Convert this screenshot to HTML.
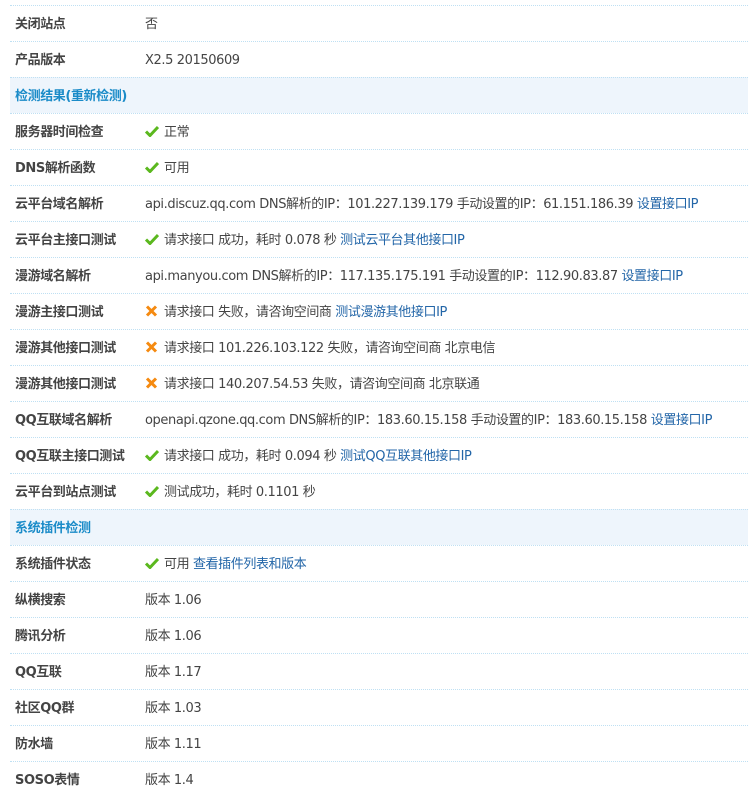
<!DOCTYPE html>
<html><head><meta charset="utf-8"><style>
body{margin:0;width:748px;height:784px;overflow:hidden;background:#fff;font:13px "DejaVu Sans","Noto Sans CJK SC",sans-serif;color:#444;letter-spacing:-0.4px}
.w{position:absolute;left:10px;top:5px;width:738px}
.r{height:35px;border-top:1px dotted #bfe0f3;position:relative;line-height:37px}
.l{position:absolute;left:5px;font-weight:bold;color:#444}
.v{position:absolute;left:135px;white-space:nowrap}
.h{background:#eef5fc;color:#1a8bc8;font-weight:bold;padding-left:5px}
a{color:#2366a8;text-decoration:none}
.ok,.no{display:inline-block;width:14px;height:12px;vertical-align:-1px;margin-right:5px}
</style></head><body>
<svg width="0" height="0" style="position:absolute"><defs>
<symbol id="ok" viewBox="0 0 14 12"><path d="M1 6.5L5 10.5L13 2" stroke="#5bb81e" stroke-width="3" fill="none"/></symbol>
<symbol id="no" viewBox="0 0 14 12"><path d="M2 1.5L11 10.5M11 1.5L2 10.5" stroke="#f58a10" stroke-width="3" fill="none"/></symbol>
</defs></svg>
<div class="w">
<div class="r"><span class="l">关闭站点</span><span class="v">否</span></div>
<div class="r"><span class="l">产品版本</span><span class="v">X2.5 20150609</span></div>
<div class="r h">检测结果(重新检测)</div>
<div class="r"><span class="l">服务器时间检查</span><span class="v"><svg class="ok"><use href="#ok"/></svg>正常</span></div>
<div class="r"><span class="l">DNS解析函数</span><span class="v"><svg class="ok"><use href="#ok"/></svg>可用</span></div>
<div class="r"><span class="l">云平台域名解析</span><span class="v">api.discuz.qq.com DNS解析的IP：101.227.139.179 手动设置的IP：61.151.186.39 <a>设置接口IP</a></span></div>
<div class="r"><span class="l">云平台主接口测试</span><span class="v"><svg class="ok"><use href="#ok"/></svg>请求接口 成功，耗时 0.078 秒 <a>测试云平台其他接口IP</a></span></div>
<div class="r"><span class="l">漫游域名解析</span><span class="v">api.manyou.com DNS解析的IP：117.135.175.191 手动设置的IP：112.90.83.87 <a>设置接口IP</a></span></div>
<div class="r"><span class="l">漫游主接口测试</span><span class="v"><svg class="no"><use href="#no"/></svg>请求接口 失败，请咨询空间商 <a>测试漫游其他接口IP</a></span></div>
<div class="r"><span class="l">漫游其他接口测试</span><span class="v"><svg class="no"><use href="#no"/></svg>请求接口 101.226.103.122 失败，请咨询空间商 北京电信</span></div>
<div class="r"><span class="l">漫游其他接口测试</span><span class="v"><svg class="no"><use href="#no"/></svg>请求接口 140.207.54.53 失败，请咨询空间商 北京联通</span></div>
<div class="r"><span class="l">QQ互联域名解析</span><span class="v">openapi.qzone.qq.com DNS解析的IP：183.60.15.158 手动设置的IP：183.60.15.158 <a>设置接口IP</a></span></div>
<div class="r"><span class="l">QQ互联主接口测试</span><span class="v"><svg class="ok"><use href="#ok"/></svg>请求接口 成功，耗时 0.094 秒 <a>测试QQ互联其他接口IP</a></span></div>
<div class="r"><span class="l">云平台到站点测试</span><span class="v"><svg class="ok"><use href="#ok"/></svg>测试成功，耗时 0.1101 秒</span></div>
<div class="r h">系统插件检测</div>
<div class="r"><span class="l">系统插件状态</span><span class="v"><svg class="ok"><use href="#ok"/></svg>可用 <a>查看插件列表和版本</a></span></div>
<div class="r"><span class="l">纵横搜索</span><span class="v">版本 1.06</span></div>
<div class="r"><span class="l">腾讯分析</span><span class="v">版本 1.06</span></div>
<div class="r"><span class="l">QQ互联</span><span class="v">版本 1.17</span></div>
<div class="r"><span class="l">社区QQ群</span><span class="v">版本 1.03</span></div>
<div class="r"><span class="l">防水墙</span><span class="v">版本 1.11</span></div>
<div class="r"><span class="l">SOSO表情</span><span class="v">版本 1.4</span></div>
</div>
</body></html>
